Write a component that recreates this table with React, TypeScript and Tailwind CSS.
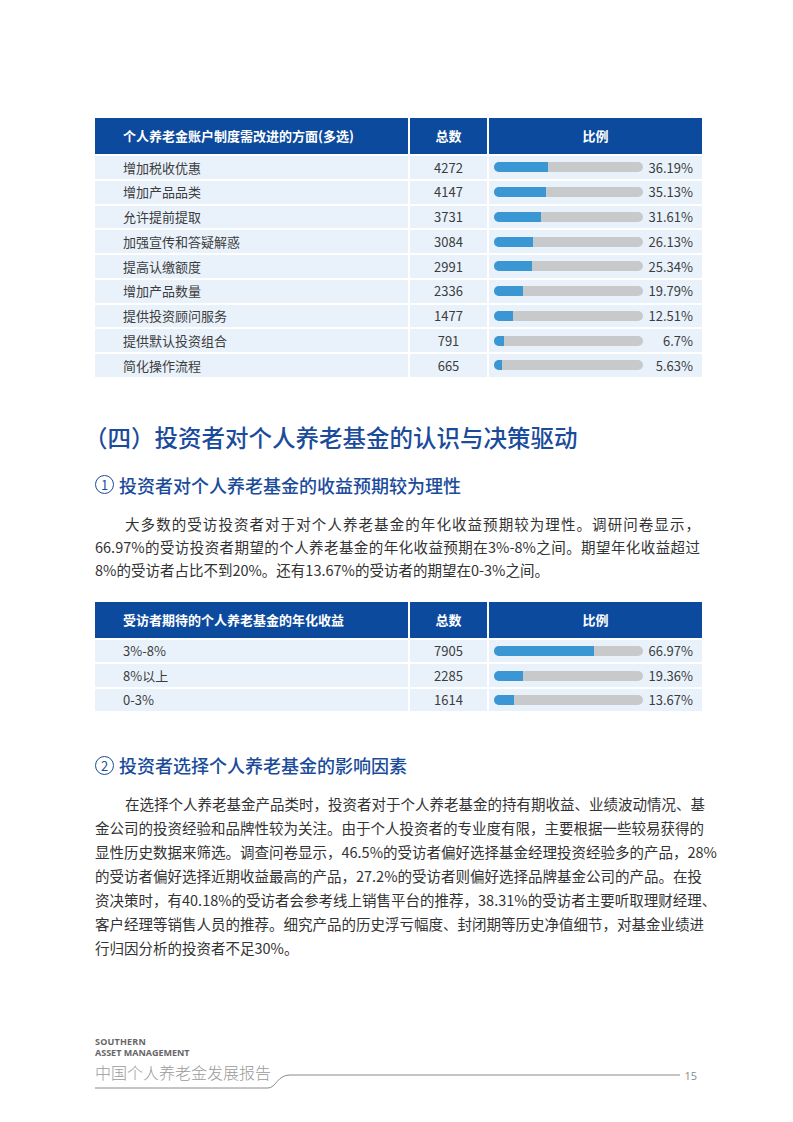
import React from "react";

const FONT = { fontFamily: '"Noto Sans CJK SC", "Noto Sans", sans-serif' };

type Row = { label: string; count: string; pct: number; text: string };

const table1: Row[] = [
  { label: "增加税收优惠", count: "4272", pct: 36.19, text: "36.19%" },
  { label: "增加产品品类", count: "4147", pct: 35.13, text: "35.13%" },
  { label: "允许提前提取", count: "3731", pct: 31.61, text: "31.61%" },
  { label: "加强宣传和答疑解惑", count: "3084", pct: 26.13, text: "26.13%" },
  { label: "提高认缴额度", count: "2991", pct: 25.34, text: "25.34%" },
  { label: "增加产品数量", count: "2336", pct: 19.79, text: "19.79%" },
  { label: "提供投资顾问服务", count: "1477", pct: 12.51, text: "12.51%" },
  { label: "提供默认投资组合", count: "791", pct: 6.7, text: "6.7%" },
  { label: "简化操作流程", count: "665", pct: 5.63, text: "5.63%" },
];

const table2: Row[] = [
  { label: "3%-8%", count: "7905", pct: 66.97, text: "66.97%" },
  { label: "8%以上", count: "2285", pct: 19.36, text: "19.36%" },
  { label: "0-3%", count: "1614", pct: 13.67, text: "13.67%" },
];

function DataTable({ title, rows, rowH }: { title: string; rows: Row[]; rowH: string }) {
  return (
    <div className="w-[607px] flex flex-col gap-[2px] text-[13px]">
      <div className="grid grid-cols-[313px_77px_213px] gap-[2px] h-[36px]">
        <div className="bg-[#0c4a9e] text-white font-bold flex items-center pl-[28px]">{title}</div>
        <div className="bg-[#0c4a9e] text-white font-bold flex items-center justify-center">总数</div>
        <div className="bg-[#0c4a9e] text-white font-bold flex items-center justify-center">比例</div>
      </div>
      {rows.map((r) => (
        <div key={r.label} className={`grid grid-cols-[313px_77px_213px] gap-[2px] ${rowH} text-[#3c3c3c]`}>
          <div className="bg-[#e9f2fb] flex items-center pl-[28px]">{r.label}</div>
          <div className="bg-[#e9f2fb] flex items-center justify-center">{r.count}</div>
          <div className="bg-[#e9f2fb] flex items-center pl-[5px] pr-[9px]">
            <div className="w-[149px] h-[10px] rounded-full bg-[#c8c9cb] overflow-hidden">
              <div className="h-full bg-[#3b96d4]" style={{ width: `${r.pct}%` }} />
            </div>
            <div className="flex-1 text-right">{r.text}</div>
          </div>
        </div>
      ))}
    </div>
  );
}

function Para({ lines, lh }: { lines: string[]; lh: string }) {
  return (
    <div className={`w-[605px] text-[14.5px] text-[#333] ${lh}`}>
      {lines.map((l, i) => (
        <div
          key={i}
          className={
            i === lines.length - 1
              ? "whitespace-nowrap text-left"
              : `whitespace-nowrap text-justify [text-align-last:justify] ${i === 0 ? "pl-[30px]" : ""}`
          }
        >
          {l}
        </div>
      ))}
    </div>
  );
}

function SubHeading({ n, text, mt }: { n: string; text: string; mt: string }) {
  return (
    <h3 className={`${mt} flex items-center gap-[5px] text-[18px] leading-[26px] font-medium text-[#1b4c9b]`}>
      <span className="w-[19px] h-[19px] rounded-full border-[1.5px] border-[#1b4c9b] flex items-center justify-center text-[13px] leading-none font-normal">
        {n}
      </span>
      <span>{text}</span>
    </h3>
  );
}

export default function App() {
  return (
    <div className="w-[793px] h-[1122px] bg-white relative overflow-hidden" style={FONT}>
      <div className="flex flex-col pl-[95px] pt-[118px]">
        <DataTable title="个人养老金账户制度需改进的方面(多选)" rows={table1} rowH="h-[22.75px]" />

        <h2 className="mt-[45px] -ml-[11px] text-[23.5px] leading-[30px] font-medium text-[#1b4c9b]">
          （四）投资者对个人养老基金的认识与决策驱动
        </h2>

        <SubHeading mt="mt-[20px]" n="1" text="投资者对个人养老基金的收益预期较为理性" />

        <div className="mt-[14px]">
          <Para
            lh="leading-[23px]"
            lines={[
              "大多数的受访投资者对于对个人养老基金的年化收益预期较为理性。调研问卷显示，",
              "66.97%的受访投资者期望的个人养老基金的年化收益预期在3%-8%之间。期望年化收益超过",
              "8%的受访者占比不到20%。还有13.67%的受访者的期望在0-3%之间。",
            ]}
          />
        </div>

        <div className="mt-[21px]">
          <DataTable title="受访者期待的个人养老基金的年化收益" rows={table2} rowH="h-[22.5px]" />
        </div>

        <SubHeading mt="mt-[41px]" n="2" text="投资者选择个人养老基金的影响因素" />

        <div className="mt-[14px]">
          <Para
            lh="leading-[24px]"
            lines={[
              "在选择个人养老基金产品类时，投资者对于个人养老基金的持有期收益、业绩波动情况、基",
              "金公司的投资经验和品牌性较为关注。由于个人投资者的专业度有限，主要根据一些较易获得的",
              "显性历史数据来筛选。调查问卷显示，46.5%的受访者偏好选择基金经理投资经验多的产品，28%",
              "的受访者偏好选择近期收益最高的产品，27.2%的受访者则偏好选择品牌基金公司的产品。在投",
              "资决策时，有40.18%的受访者会参考线上销售平台的推荐，38.31%的受访者主要听取理财经理、",
              "客户经理等销售人员的推荐。细究产品的历史浮亏幅度、封闭期等历史净值细节，对基金业绩进",
              "行归因分析的投资者不足30%。",
            ]}
          />
        </div>
      </div>

      {/* footer */}
      <div className="absolute left-0 top-[1036px] w-[793px] h-[60px]">
        <svg className="absolute left-0 top-0" width="793" height="60" viewBox="0 0 793 60" fill="none">
          <path
            d="M95 52 L268 52 C276 52 277 39 290 39 L680 39"
            stroke="#8a8a8a"
            strokeWidth="1"
          />
        </svg>
        <div className="flex items-start pl-[95px] pr-[96px]">
          <div className="flex flex-col">
            <div className="text-[9px] leading-[11px] font-bold text-[#666] tracking-[0.2px]" style={{ fontFamily: '"Open Sans", "Liberation Sans", sans-serif' }}>
              SOUTHERN
            </div>
            <div className="text-[9px] leading-[11px] font-bold text-[#666]" style={{ fontFamily: '"Open Sans", "Liberation Sans", sans-serif' }}>
              ASSET MANAGEMENT
            </div>
            <div className="mt-[4px] text-[16px] leading-[20px] font-light text-[#9a9a9a]">中国个人养老金发展报告</div>
          </div>
          <div className="flex-1" />
          <div className="mt-[33px] text-[11px] leading-[14px] text-[#8a8a8a]" style={{ fontFamily: '"Open Sans", "Liberation Sans", sans-serif' }}>
            15
          </div>
        </div>
      </div>
    </div>
  );
}
